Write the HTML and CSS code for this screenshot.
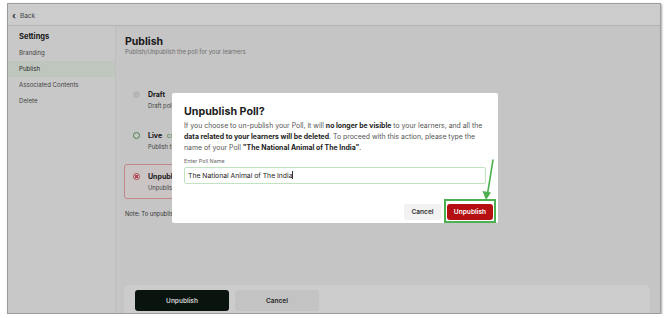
FILE: index.html
```html
<!DOCTYPE html>
<html lang="en">
<head>
    <meta charset="UTF-8">
    <title>Publish Settings</title>
    <link rel="stylesheet" href="styles.css">
</head>
<body>
    <div class="frame">
        <div class="topbar"><span class="back-arrow">&lsaquo;</span> Back</div>
        <div class="layout">
            <aside class="sidebar">
                <div class="side-title">Settings</div>
                <div class="side-item">Branding</div>
                <div class="side-item active">Publish</div>
                <div class="side-item">Associated Contents</div>
                <div class="side-item">Delete</div>
            </aside>
            <main class="content">
                <h1>Publish</h1>
                <p class="subtitle">Publish/Unpublish the poll for your learners</p>

                <div class="options">
                    <div class="option">
                        <span class="radio radio-disabled"></span>
                        <div>
                            <div class="option-title">Draft</div>
                            <div class="option-desc">Draft polls are not visible to your learners</div>
                        </div>
                    </div>
                    <div class="option">
                        <span class="radio radio-live"></span>
                        <div>
                            <div class="option-title">Live <span class="current">current</span></div>
                            <div class="option-desc">Publish the poll so learners can see it</div>
                        </div>
                    </div>
                    <div class="option selected">
                        <span class="radio radio-checked"></span>
                        <div>
                            <div class="option-title">Unpublish</div>
                            <div class="option-desc">Unpublish the poll and remove it from learners</div>
                        </div>
                    </div>
                </div>
                <p class="note">Note: To unpublish this poll you will need to confirm its name.</p>

                <div class="footer-bar">
                    <button class="btn btn-dark">Unpublish</button>
                    <button class="btn btn-light">Cancel</button>
                </div>
            </main>
        </div>

        <div class="overlay"></div>

        <div class="modal">
            <h2>Unpublish Poll?</h2>
            <p class="modal-text">If you choose to un-publish your Poll, it will <b>no longer be visible</b> to your learners, and all the <b>data related to your learners will be deleted</b>. To proceed with this action, please type the name of your Poll <b>"The National Animal of The India"</b>.</p>
            <label class="field-label">Enter Poll Name</label>
            <div class="field">The National Animal of The India<span class="caret"></span></div>
            <div class="modal-actions">
                <button class="mbtn mbtn-cancel">Cancel</button>
                <button class="mbtn mbtn-danger">Unpublish</button>
            </div>
        </div>

        <div class="highlight"></div>
        <svg class="arrow" width="20" height="45" viewBox="0 0 20 45">
            <line x1="13" y1="3" x2="7.5" y2="37" stroke="#4caf50" stroke-width="1.6" stroke-linecap="round"/>
            <polygon points="6,43 2.5,34 11,35.5" fill="#4caf50"/>
        </svg>
    </div>
</body>
</html>
```

FILE: styles.css
```css
body, html {
    margin: 0;
    padding: 0;
    background-color: #ffffff;
    font-family: Inter, "Noto Sans", Arial, sans-serif;
    color: #222;
}
.frame {
    position: relative;
    margin: 3px 0 0 7px;
    width: 652px;
    height: 309px;
    border: 1px solid #9d9d9d;
    box-shadow: 1px 1px 2px rgba(0, 0, 0, 0.35);
    display: flex;
    flex-direction: column;
    overflow: hidden;
    background-color: #f7f7f7;
}
.topbar {
    height: 22px;
    flex: 0 0 22px;
    box-sizing: border-box;
    display: flex;
    align-items: center;
    padding: 2px 0 0 4px;
    font-size: 6.5px;
    color: #555;
    background-color: #ffffff;
    border-bottom: 1px solid #e2e2e2;
}
.back-arrow {
    font-size: 9px;
    font-weight: bold;
    margin-right: 4px;
    color: #333;
}
.layout {
    flex: 1;
    display: flex;
}
.sidebar {
    width: 107px;
    background-color: #fbfbfb;
    border-right: 1px solid #eeeeee;
    padding-top: 3px;
}
.side-title {
    font-size: 7.5px;
    font-weight: bold;
    color: #222;
    padding: 0 11px;
    height: 16px;
    line-height: 16px;
}
.side-item {
    font-size: 6.1px;
    color: #555;
    padding: 0 11px;
    height: 16px;
    line-height: 16px;
}
.side-item.active {
    background-color: #eef8ee;
    color: #333;
}
.content {
    flex: 1;
    display: flex;
    flex-direction: column;
    padding: 0 8px 0 8px;
}
h1 {
    font-size: 10.5px;
    font-weight: bold;
    margin: 9px 0 0 1px;
    line-height: 13px;
    color: #1e1e1e;
}
.subtitle {
    font-size: 5.9px;
    color: #888;
    margin: 0 0 0 1px;
    line-height: 8px;
}
.options {
    margin-top: 26px;
    display: flex;
    flex-direction: column;
    gap: 6px;
    width: 340px;
}
.option {
    height: 35px;
    box-sizing: border-box;
    display: flex;
    align-items: flex-start;
    padding: 7px 8px;
    gap: 8px;
    border: 1px solid transparent;
    border-radius: 3px;
}
.option.selected {
    border-color: #f2a9ad;
    background-color: #fdf6f7;
}
.radio {
    width: 7px;
    height: 7px;
    border-radius: 50%;
    margin-top: 0.5px;
    box-sizing: border-box;
    flex: 0 0 7px;
}
.radio-disabled {
    background-color: #e4e4e4;
}
.radio-live {
    border: 1.5px solid #58a85c;
}
.radio-checked {
    border: 1.5px solid #e05560;
    background: radial-gradient(circle, #e05560 0 1.6px, #ffffff 2px);
}
.option-title {
    font-size: 7px;
    font-weight: bold;
    color: #222;
    line-height: 9px;
}
.current {
    color: #58a85c;
    font-weight: normal;
    margin-left: 3px;
}
.option-desc {
    font-size: 5.8px;
    color: #555;
    margin-top: 3px;
    line-height: 8px;
}
.note {
    margin: 11px 0 0 1px;
    font-size: 5.8px;
    color: #444;
}
.footer-bar {
    margin-top: auto;
    height: 28px;
    box-sizing: border-box;
    background-color: #ffffff;
    border-radius: 5px 5px 0 0;
    padding: 5px 11px 2px 11px;
    display: flex;
    gap: 6px;
    margin-right: 2px;
}
.btn {
    height: 21px;
    border: none;
    border-radius: 3px;
    font-family: inherit;
    font-size: 6.5px;
    font-weight: 600;
}
.btn-dark {
    width: 94px;
    background-color: #0c1a12;
    color: #ffffff;
}
.btn-light {
    width: 84px;
    background-color: #f4f4f4;
    color: #333;
}
.overlay {
    position: absolute;
    inset: 0;
    background-color: rgba(0, 0, 0, 0.2);
}
.modal {
    position: absolute;
    left: 164px;
    top: 89px;
    width: 326px;
    height: 130px;
    box-sizing: border-box;
    background-color: #ffffff;
    border-radius: 2px;
    padding: 12px 5px 3px 12px;
    display: flex;
    flex-direction: column;
}
.modal h2 {
    margin: 0;
    font-size: 10.7px;
    line-height: 13px;
    font-weight: bold;
    color: #1c1c1c;
}
.modal-text {
    margin: 2px 0 0 0;
    padding-right: 7px;
    font-size: 6.9px;
    line-height: 11px;
    color: #555;
}
.modal-text b {
    color: #222;
}
.field-label {
    margin-top: 4px;
    font-size: 5.4px;
    line-height: 8px;
    color: #666;
}
.field {
    margin-top: 2px;
    width: 302px;
    height: 17px;
    box-sizing: border-box;
    border: 1px solid #c2e3c2;
    border-radius: 2px;
    padding-left: 3px;
    font-size: 6.8px;
    line-height: 15px;
    color: #222;
}
.caret {
    display: inline-block;
    width: 0.6px;
    height: 8px;
    background-color: #333;
    vertical-align: -1px;
}
.modal-actions {
    margin-top: auto;
    display: flex;
    justify-content: flex-end;
    gap: 6px;
}
.mbtn {
    height: 16px;
    border: none;
    border-radius: 3px;
    font-family: inherit;
    font-size: 6.6px;
    font-weight: 600;
}
.mbtn-cancel {
    width: 37px;
    background-color: #f2f2f2;
    color: #333;
}
.mbtn-danger {
    width: 46px;
    background-color: #b50f12;
    color: #ffffff;
}
.highlight {
    position: absolute;
    left: 436px;
    top: 195px;
    width: 52px;
    height: 24px;
    box-sizing: border-box;
    border: 2px solid #4caf50;
}
.arrow {
    position: absolute;
    left: 472px;
    top: 153px;
}
```
